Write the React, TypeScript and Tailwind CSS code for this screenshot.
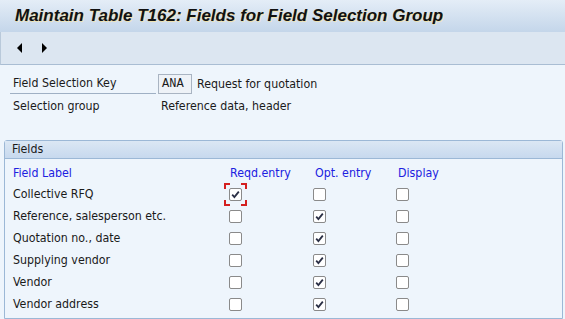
import React from "react";

const rows: [string, boolean, boolean, boolean][] = [
  ["Collective RFQ", true, false, false],
  ["Reference, salesperson etc.", false, true, false],
  ["Quotation no., date", false, true, false],
  ["Supplying vendor", false, true, false],
  ["Vendor", false, true, false],
  ["Vendor address", false, true, false],
];

function Box({ checked, focused }: { checked: boolean; focused?: boolean }) {
  const box = (
    <div className="w-[13px] h-[13px] rounded-[2px] border border-[#8a8a8a] bg-white flex items-center justify-center">
      {checked && (
        <svg width="9" height="9" viewBox="0 0 9 9">
          <path d="M1.2 4.6 L3.4 7 L7.8 1.6" fill="none" stroke="#2a2f45" strokeWidth="1.8" />
        </svg>
      )}
    </div>
  );
  if (!focused) return box;
  return (
    <div className="relative w-[13px] h-[13px]">
      {box}
      <div className="absolute -left-[5px] -top-[5px] w-[6px] h-[6px] border-l-2 border-t-2 border-[#d42020]" />
      <div className="absolute -right-[5px] -top-[5px] w-[6px] h-[6px] border-r-2 border-t-2 border-[#d42020]" />
      <div className="absolute -left-[5px] -bottom-[5px] w-[6px] h-[6px] border-l-2 border-b-2 border-[#d42020]" />
      <div className="absolute -right-[5px] -bottom-[5px] w-[6px] h-[6px] border-r-2 border-b-2 border-[#d42020]" />
    </div>
  );
}

export default function App() {
  return (
    <div
      className="w-[565px] h-[319px] overflow-hidden bg-[#eef5fc] text-[12.3px] text-[#1a1a1a] flex flex-col"
      style={{ fontFamily: "'DejaVu Sans Condensed', 'DejaVu Sans', sans-serif", fontStretch: "condensed" }}
    >
      <div className="h-[32px] shrink-0 bg-gradient-to-b from-[#e4edf7] to-[#c4d6ea] flex items-center pl-[15px]">
        <span
          className="font-bold italic text-[17px] text-[#111]"
          style={{ fontFamily: "'Liberation Sans', Arial, sans-serif", textShadow: "1px 1px 0 rgba(255,230,150,0.7)" }}
        >
          Maintain Table T162: Fields for Field Selection Group
        </span>
      </div>
      <div className="h-[33px] shrink-0 bg-[#dce6f1] border-b border-[#a9bdd3] border-l border-l-[#b9c9da] flex items-center gap-[16px] pl-[15px]">
        <svg width="8" height="10" viewBox="0 0 8 10"><path d="M6 0 L6 10 L1 5 Z" fill="#000" /></svg>
        <svg width="8" height="10" viewBox="0 0 8 10"><path d="M2 0 L2 10 L7 5 Z" fill="#000" /></svg>
      </div>
      <div className="pt-[9px] pl-[10px] flex flex-col">
        <div className="flex items-center h-[20px]">
          <div className="w-[146px] h-[20px] border-b border-[#9fb0c4] pl-[3px] flex items-center">Field Selection Key</div>
          <div className="ml-[2px] w-[34px] h-[20px] border border-[#a9b4c2] bg-[#eef2f7] flex items-center pl-[3px] text-[12px]" style={{ fontFamily: "'Liberation Mono', monospace" }}>ANA</div>
          <div className="ml-[5px]">Request for quotation</div>
        </div>
        <div className="flex items-center h-[24px]">
          <div className="w-[151px] pl-[3px]">Selection group</div>
          <div>Reference data, header</div>
        </div>
      </div>
      <div className="mt-[22px] ml-[4px] mr-[2px] flex-1 border border-[#9cb8d6] rounded-t-[3px] flex flex-col">
        <div className="h-[18px] bg-gradient-to-b from-[#dbe7f4] to-[#c7d9ee] border-b border-[#9cb8d6] flex items-center pl-[7px]">Fields</div>
        <div className="pl-[8px] pt-[4px]">
          <div className="flex items-center h-[20px] text-[#2020e0]">
            <div className="w-[217px]">Field Label</div>
            <div className="w-[85px]">Reqd.entry</div>
            <div className="w-[83px]">Opt. entry</div>
            <div>Display</div>
          </div>
          {rows.map(([label, a, b, c], i) => (
            <div key={label} className="flex items-center h-[22px]">
              <div className="w-[216px]">{label}</div>
              <div className="w-[84px]"><Box checked={a} focused={i === 0} /></div>
              <div className="w-[83px]"><Box checked={b} /></div>
              <div><Box checked={c} /></div>
            </div>
          ))}
        </div>
      </div>
    </div>
  );
}
